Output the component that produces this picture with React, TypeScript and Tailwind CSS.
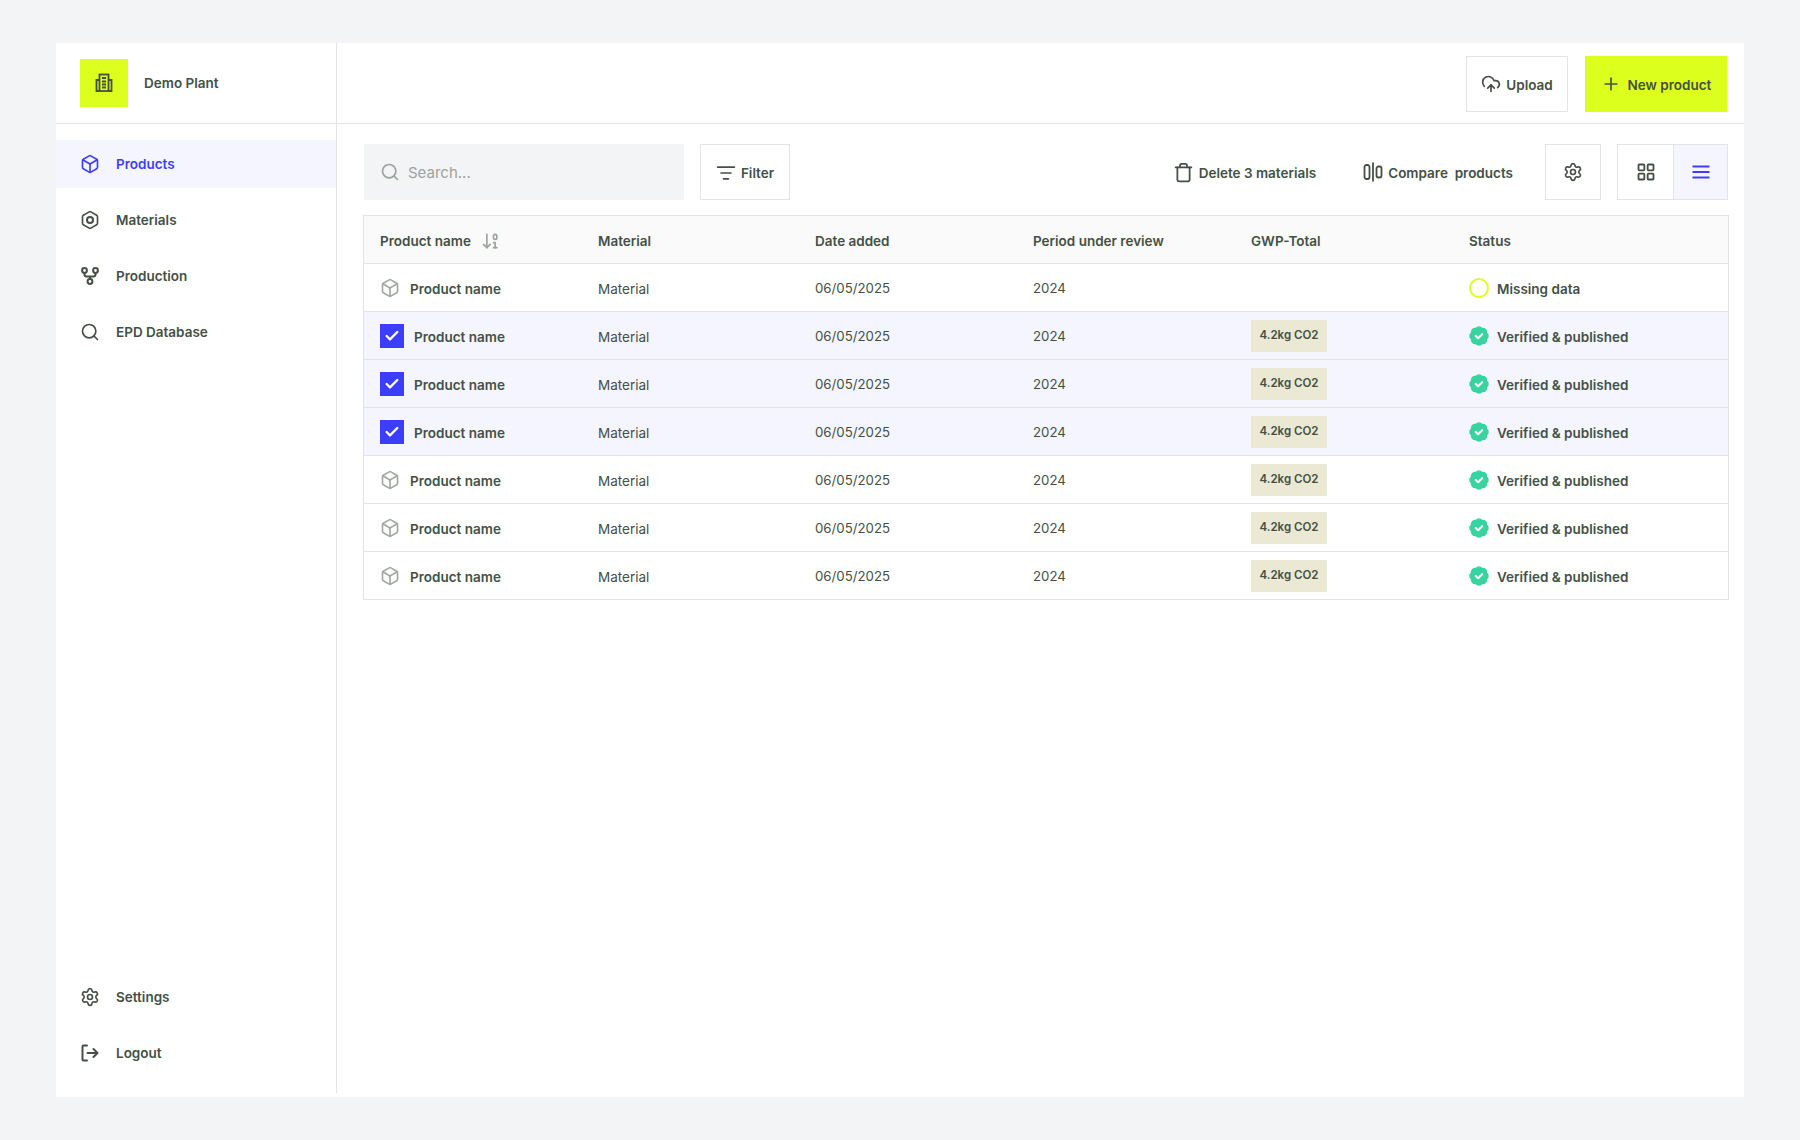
import React from 'react';
import { ArrowDown01, Box, Check, CloudUpload, Hexagon, LayoutGrid, ListFilter, Plus, Search, Settings, Trash } from 'lucide-react';

const rows = [
  { selected: false, gwp: '', missing: true },
  { selected: true, gwp: '4.2kg CO2', missing: false },
  { selected: true, gwp: '4.2kg CO2', missing: false },
  { selected: true, gwp: '4.2kg CO2', missing: false },
  { selected: false, gwp: '4.2kg CO2', missing: false },
  { selected: false, gwp: '4.2kg CO2', missing: false },
  { selected: false, gwp: '4.2kg CO2', missing: false },
];

const gridCols = 'grid grid-cols-[218px_217px_218px_218px_218px_1fr] items-center';

const PlantIcon = () => (
  <svg width="20" height="20" viewBox="0 0 20 20" fill="none" stroke="currentColor" strokeWidth="1.8">
    <rect x="5.5" y="1.5" width="9" height="16.5" />
    <path d="M5.5 7H2.5v11h3M14.5 7h3v11h-3" />
    <path d="M8 5h4M8 8.5h4M8 11.5h4M8 14.5h4" />
  </svg>
);

const FlowIcon = () => (
  <svg width="20" height="20" viewBox="0 0 20 20" fill="none" stroke="currentColor" strokeWidth="2">
    <circle cx="4.5" cy="4.5" r="2.4" />
    <circle cx="15.5" cy="4.5" r="2.4" />
    <circle cx="10" cy="15.5" r="2.4" />
    <path d="M4.5 7v1.5a2 2 0 0 0 2 2h7a2 2 0 0 0 2-2V7M10 10.5V13" />
  </svg>
);

const LogoutIcon = () => (
  <svg width="20" height="20" viewBox="0 0 20 20" fill="none" stroke="currentColor" strokeWidth="2" strokeLinecap="round" strokeLinejoin="round">
    <path d="M7 2.5H3.5a1 1 0 0 0-1 1v13a1 1 0 0 0 1 1H7" />
    <path d="M7.5 10h10M13.5 6l4 4-4 4" />
  </svg>
);

const CompareIcon = () => (
  <svg width="20" height="20" viewBox="0 0 20 20" fill="none" stroke="currentColor" strokeWidth="1.8">
    <rect x="1.5" y="3" width="5" height="14" rx="2" />
    <rect x="13.5" y="4.5" width="5" height="11" rx="2" />
    <path d="M10 0.5v19" />
  </svg>
);

const MenuLines = () => (
  <svg width="20" height="20" viewBox="0 0 20 20" fill="none" stroke="currentColor" strokeWidth="2">
    <path d="M1.5 4.5h17M1.5 10h17M1.5 15.5h17" />
  </svg>
);

const VerifiedIcon = () => (
  <svg width="20" height="20" viewBox="1 1 22 22" fill="none" strokeLinecap="round" strokeLinejoin="round">
    <path
      d="M3.85 8.62a4 4 0 0 1 4.78-4.77 4 4 0 0 1 6.74 0 4 4 0 0 1 4.78 4.78 4 4 0 0 1 0 6.74 4 4 0 0 1-4.77 4.78 4 4 0 0 1-6.75 0 4 4 0 0 1-4.78-4.77 4 4 0 0 1 0-6.76Z"
      fill="#38d39f"
      stroke="#38d39f"
      strokeWidth="1.5"
    />
    <path d="m8.5 12 2.5 2.5 4.5-4.5" stroke="#ffffff" strokeWidth="2.2" />
  </svg>
);

const NavItem = ({ icon, label, active }: { icon: React.ReactNode; label: string; active?: boolean }) => (
  <div className={active ? 'flex h-12 items-center gap-4 bg-[#f5f5ff] pl-6 text-[#3d3dff]' : 'flex h-12 items-center gap-4 pl-6 text-[#445045]'}>
    <span className="flex h-5 w-5 items-center justify-center">{icon}</span>
    <span className="pt-px text-[13.5px] font-semibold">{label}</span>
  </div>
);

const App = () => {
  return (
    <div className="min-h-[1140px] bg-[#f3f4f6] px-14 pt-[43px] text-[#445045] font-['Inter',sans-serif]">
      <div className="flex h-[1054px] bg-white">
        <aside className="mb-1 flex w-[281px] flex-col border-r border-[#e4e4e7]">
          <div className="flex h-[81px] items-center gap-4 border-b border-[#e4e4e7] pl-6">
            <div className="flex h-12 w-12 items-center justify-center bg-[#dcff1e]">
              <PlantIcon />
            </div>
            <span className="pt-px text-[13.5px] font-semibold">Demo Plant</span>
          </div>
          <nav className="flex flex-1 flex-col gap-2 pt-4 pb-4">
            <NavItem active label="Products" icon={<Box size={20} strokeWidth={2} />} />
            <NavItem label="Materials" icon={
              <span className="relative flex items-center justify-center">
                <Hexagon size={20} strokeWidth={2} />
                <span className="absolute h-[8px] w-[8px] rounded-full border-2 border-[#445045]" />
              </span>
            } />
            <NavItem label="Production" icon={<FlowIcon />} />
            <NavItem label="EPD Database" icon={<Search size={20} strokeWidth={2} />} />
            <div className="mt-auto flex flex-col gap-2">
              <NavItem label="Settings" icon={<Settings size={20} strokeWidth={2} />} />
              <NavItem label="Logout" icon={<LogoutIcon />} />
            </div>
          </nav>
        </aside>

        <main className="flex-1">
          <div className="flex h-[81px] items-center justify-end gap-[17px] border-b border-[#e4e4e7] pt-[2px] pr-[17px]">
            <button className="flex h-14 w-[102px] items-center justify-center gap-[5px] border border-[#e4e4e7] text-[13.5px] font-semibold">
              <CloudUpload size={20} strokeWidth={2} />
              <span className="pt-[2px]">Upload</span>
            </button>
            <button className="flex h-14 w-[142px] items-center justify-center gap-[7px] bg-[#dcff1e] text-[13.5px] font-semibold">
              <Plus size={20} strokeWidth={2} />
              <span className="pt-[2px]">New product</span>
            </button>
          </div>

          <div className="pr-4 pl-[27px] pt-5">
            <div className="flex items-center">
              <div className="flex h-14 w-[320px] items-center gap-2 bg-[#f3f4f6] pl-4 text-[#9ca39d]">
                <Search size={20} strokeWidth={2} />
                <span className="pt-[2px] text-[15px]">Search...</span>
              </div>
              <button className="ml-4 flex h-14 w-[90px] items-center justify-center gap-[5px] border border-[#e4e4e7] pt-[2px] text-[13.5px] font-semibold">
                <ListFilter size={20} strokeWidth={2} />
                Filter
              </button>
              <div className="ml-auto flex items-center gap-[5px] text-[13.5px] font-semibold">
                <Trash size={21} strokeWidth={2} />
                <span className="pt-[2px]">Delete 3 materials</span>
              </div>
              <div className="ml-[47px] flex items-center gap-[5px] text-[13.5px] font-semibold whitespace-pre">
                <CompareIcon />
                <span className="pt-[2px]">Compare  products</span>
              </div>
              <button className="ml-8 flex h-14 w-14 items-center justify-center border border-[#e4e4e7]">
                <Settings size={20} strokeWidth={2} />
              </button>
              <div className="ml-4 flex h-14 border border-[#e4e4e7]">
                <button className="flex w-[55px] items-center justify-center">
                  <LayoutGrid size={20} strokeWidth={2.2} />
                </button>
                <button className="flex w-[54px] items-center justify-center border-l border-[#e4e4e7] bg-[#f5f5ff] text-[#3d3dff]">
                  <MenuLines />
                </button>
              </div>
            </div>

            <div className="mt-[15px] -mx-px border-x border-t border-[#e4e4e7] text-[13.5px]">
              <div className={`${gridCols} h-12 border-b border-[#e4e4e7] bg-[#fafafa] pt-[3px] font-semibold`}>
                <div className="flex items-center gap-[10px] pl-4">
                  Product name
                  <ArrowDown01 size={20} strokeWidth={2} className="text-[#9ca39d]" />
                </div>
                <div className="pl-4">Material</div>
                <div className="pl-4">Date added</div>
                <div className="pl-4">Period under review</div>
                <div className="pl-4">GWP-Total</div>
                <div className="pl-4">Status</div>
              </div>
              {rows.map((row, i) => (
                <div key={i} className={`${gridCols} h-12 border-b border-[#e4e4e7] ${row.selected ? 'bg-[#f5f5ff]' : 'bg-white'}`}>
                  <div className="flex items-center pl-4 font-semibold">
                    {row.selected ? (
                      <span className="mr-[10px] flex h-6 w-6 items-center justify-center bg-[#3d3dff] text-white">
                        <Check size={16} strokeWidth={3.5} />
                      </span>
                    ) : (
                      <Box size={20} strokeWidth={2} className="mr-[10px] text-[#a3a8a3]" />
                    )}
                    <span className="pt-[3px]">Product name</span>
                  </div>
                  <div className="pl-4 pt-[3px]">Material</div>
                  <div className="pl-4 pt-[3px] text-[13.25px]">06/05/2025</div>
                  <div className="pl-4 pt-[3px] text-[13.25px]">2024</div>
                  <div className="pl-4">
                    {row.gwp && (
                      <span className="flex h-8 w-[76px] items-center justify-center bg-[#ebe8d3] pt-px text-[11.5px] font-semibold">{row.gwp}</span>
                    )}
                  </div>
                  <div className="flex items-center gap-2 pl-4 font-semibold">
                    {row.missing ? (
                      <span className="h-5 w-5 rounded-full border-2 border-[#dcff1e]" />
                    ) : (
                      <VerifiedIcon />
                    )}
                    <span className="pt-[3px]">{row.missing ? 'Missing data' : 'Verified & published'}</span>
                  </div>
                </div>
              ))}
            </div>
          </div>
        </main>
      </div>
    </div>
  );
};

export default App;
